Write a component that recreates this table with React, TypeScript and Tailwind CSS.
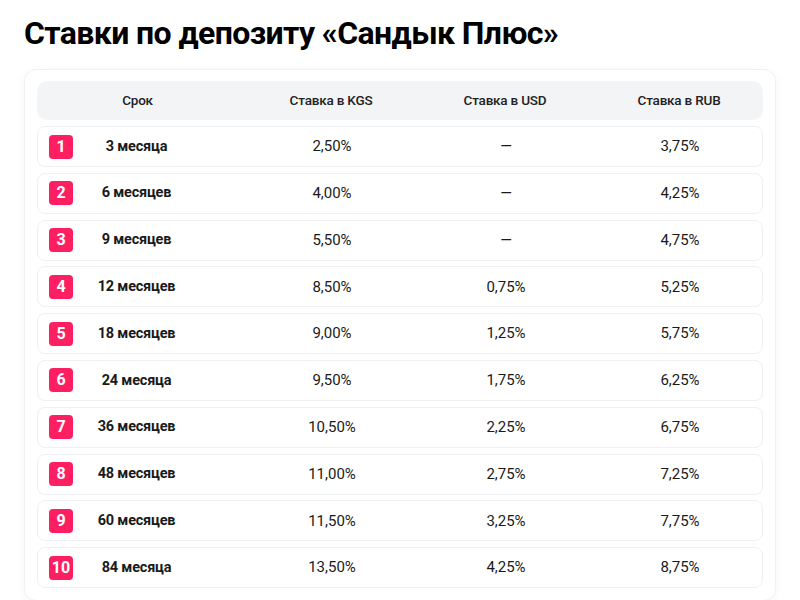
const rows = [
  { n: 1, term: "3 месяца", kgs: "2,50%", usd: "—", rub: "3,75%" },
  { n: 2, term: "6 месяцев", kgs: "4,00%", usd: "—", rub: "4,25%" },
  { n: 3, term: "9 месяцев", kgs: "5,50%", usd: "—", rub: "4,75%" },
  { n: 4, term: "12 месяцев", kgs: "8,50%", usd: "0,75%", rub: "5,25%" },
  { n: 5, term: "18 месяцев", kgs: "9,00%", usd: "1,25%", rub: "5,75%" },
  { n: 6, term: "24 месяца", kgs: "9,50%", usd: "1,75%", rub: "6,25%" },
  { n: 7, term: "36 месяцев", kgs: "10,50%", usd: "2,25%", rub: "6,75%" },
  { n: 8, term: "48 месяцев", kgs: "11,00%", usd: "2,75%", rub: "7,25%" },
  { n: 9, term: "60 месяцев", kgs: "11,50%", usd: "3,25%", rub: "7,75%" },
  { n: 10, term: "84 месяца", kgs: "13,50%", usd: "4,25%", rub: "8,75%" },
];

const grid = "grid grid-cols-[207px_174px_174px_174px] items-center";

export default function App() {
  return (
    <div className="min-h-screen bg-white px-6 pt-[12px] font-['Roboto',sans-serif] text-[#111]">
      <h1 className="text-[32px] font-bold leading-[42px] tracking-[-0.6px] text-black">
        Ставки по депозиту «Сандык Плюс»
      </h1>

      <div className="mt-[15px] rounded-[12px] border border-[#f0f1f3] bg-white px-3 pt-[11px] pb-3 shadow-[0_2px_10px_rgba(0,0,0,0.04)]">
        {/* Header */}
        <div className={`${grid} h-[39px] rounded-[10px] bg-[#f3f4f6] text-[13.5px] font-medium tracking-[-0.2px] text-[#222]`}>
          <div className="pr-[6px] text-center">Срок</div>
          <div className="text-center">Ставка в KGS</div>
          <div className="text-center">Ставка в USD</div>
          <div className="text-center">Ставка в RUB</div>
        </div>

        <div className="mt-[6px] flex flex-col gap-[5.8px]">
          {rows.map((r) => (
            <div
              key={r.n}
              className={`${grid} relative h-[41px] rounded-[8px] border border-[#eef0f2] text-[15px] text-[#1a1a1a]`}
            >
              <div className="absolute left-[11px] top-1/2 flex h-6 w-6 -translate-y-1/2 items-center justify-center rounded-[4px] bg-[#fe1f63] text-[16px] font-bold text-white">
                {r.n}
              </div>
              <div className="pr-[10px] text-center text-[14.5px] font-bold tracking-[-0.2px]">{r.term}</div>
              <div className="text-center">{r.kgs}</div>
              <div className="text-center">{r.usd}</div>
              <div className="text-center">{r.rub}</div>
            </div>
          ))}
        </div>
      </div>
    </div>
  );
}
